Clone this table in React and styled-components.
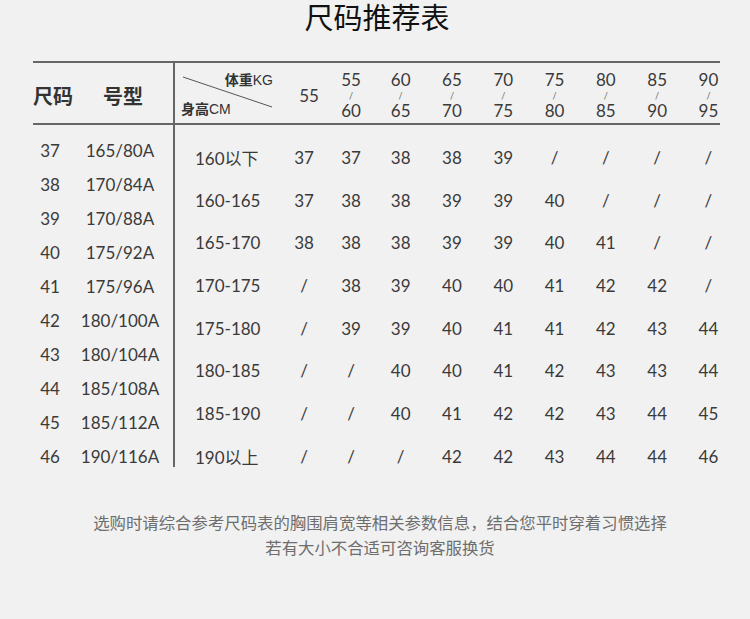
import styled, { createGlobalStyle } from "styled-components";

const weights = [
  ["55"],
  ["55", "60"],
  ["60", "65"],
  ["65", "70"],
  ["70", "75"],
  ["75", "80"],
  ["80", "85"],
  ["85", "90"],
  ["90", "95"],
];

const sizes = [
  ["37", "165/80A"],
  ["38", "170/84A"],
  ["39", "170/88A"],
  ["40", "175/92A"],
  ["41", "175/96A"],
  ["42", "180/100A"],
  ["43", "180/104A"],
  ["44", "185/108A"],
  ["45", "185/112A"],
  ["46", "190/116A"],
];

const rows = [
  ["160以下", "37", "37", "38", "38", "39", "/", "/", "/", "/"],
  ["160-165", "37", "38", "38", "39", "39", "40", "/", "/", "/"],
  ["165-170", "38", "38", "38", "39", "39", "40", "41", "/", "/"],
  ["170-175", "/", "38", "39", "40", "40", "41", "42", "42", "/"],
  ["175-180", "/", "39", "39", "40", "41", "41", "42", "43", "44"],
  ["180-185", "/", "/", "40", "40", "41", "42", "43", "43", "44"],
  ["185-190", "/", "/", "40", "41", "42", "42", "43", "44", "45"],
  ["190以上", "/", "/", "/", "42", "42", "43", "44", "44", "46"],
];

const App = () => {
  return (
    <Page>
      <GlobalStyle />
      <Title>尺码推荐表</Title>
      <Table>
        <HeadRow>
          <LeftHead>
            <span>尺码</span>
            <span>号型</span>
          </LeftHead>
          <RightGrid>
            <Corner>
              <Diagonal width="106" height="60">
                <line x1="8" y1="14" x2="97" y2="44" stroke="#555" strokeWidth="1" />
              </Diagonal>
              <CornerLabel $right>
                <b>体重</b>KG
              </CornerLabel>
              <CornerLabel>
                <b>身高</b>CM
              </CornerLabel>
            </Corner>
            {weights.map((w, i) => (
              <WeightHead key={i} $shift={i === 0}>
                {w.length === 1 ? (
                  <span>{w[0]}</span>
                ) : (
                  <>
                    <span>{w[0]}</span>
                    <Slash>/</Slash>
                    <span>{w[1]}</span>
                  </>
                )}
              </WeightHead>
            ))}
          </RightGrid>
        </HeadRow>
        <BodyRow>
          <LeftBody>
            {sizes.map(([s, t]) => (
              <SizeLine key={s}>
                <Cell>{s}</Cell>
                <Cell>{t}</Cell>
              </SizeLine>
            ))}
          </LeftBody>
          <RightBody>
            {rows.map((r) => (
              <DataLine key={r[0]}>
                {r.map((v, i) =>
                  i === 0 ? (
                    <HeightCell key={i}>{v}</HeightCell>
                  ) : (
                    <Cell key={i}>{v}</Cell>
                  )
                )}
              </DataLine>
            ))}
          </RightBody>
        </BodyRow>
      </Table>
      <Note>
        <p>选购时请综合参考尺码表的胸围肩宽等相关参数信息，结合您平时穿着习惯选择</p>
        <p>若有大小不合适可咨询客服换货</p>
      </Note>
    </Page>
  );
};

export default App;

const GlobalStyle = createGlobalStyle`
  html, body {
    margin: 0;
    padding: 0;
    background: #f1f1f1;
  }
`;

const Page = styled.div`
  width: 750px;
  min-height: 619px;
  background: #f1f1f1;
  font-family: Lato, "Noto Sans CJK SC", sans-serif;
  color: #3a3a3a;
`;

const Title = styled.h1`
  margin: 0;
  padding: 2px 0 0 4px;
  text-align: center;
  font-family: "Noto Sans CJK SC", sans-serif;
  font-size: 29px;
  font-weight: 400;
  line-height: 28px;
  color: #111;
`;

const Table = styled.div`
  width: 687px;
  margin: 31px 0 0 33px;
`;

const COLS = "106px 46px 48px repeat(7, 51.3px)";

const HeadRow = styled.div`
  display: grid;
  grid-template-columns: 140px 1fr;
  height: 60px;
  border-top: 2px solid #666;
  border-bottom: 2px solid #666;
`;

const LeftHead = styled.div`
  display: flex;
  align-items: center;
  gap: 30px;
  padding-top: 4px;
  font-family: "Noto Sans CJK SC", sans-serif;
  font-size: 20px;
  font-weight: 700;
  color: #333;
`;

const RightGrid = styled.div`
  display: grid;
  grid-template-columns: ${COLS};
  border-left: 2px solid #666;
`;

const Corner = styled.div`
  position: relative;
  display: flex;
  flex-direction: column;
  justify-content: space-between;
  padding: 7px 8px 4px 6px;
`;

const Diagonal = styled.svg`
  position: absolute;
  left: 0;
  top: 0;
`;

const CornerLabel = styled.div`
  align-self: ${(p) => (p.$right ? "flex-end" : "flex-start")};
  font-family: "Liberation Sans", "Noto Sans CJK SC", sans-serif;
  font-size: 14px;
  line-height: 19px;
  color: #333;
  b {
    font-family: "Noto Sans CJK SC", sans-serif;
    font-weight: 700;
  }
`;

const WeightHead = styled.div`
  display: flex;
  flex-direction: column;
  align-items: center;
  justify-content: center;
  padding-top: 5px;
  padding-left: ${(p) => (p.$shift ? "10px" : "0")};
  font-size: 17px;
  line-height: 18px;
`;

const Slash = styled.span`
  font-size: 9px;
  line-height: 13px;
  color: #666;
`;

const BodyRow = styled.div`
  display: grid;
  grid-template-columns: 140px 1fr;
  grid-template-rows: 342px;
`;

const LeftBody = styled.div`
  padding-top: 8px;
`;

const SizeLine = styled.div`
  display: grid;
  grid-template-columns: 34px 106px;
  height: 34.1px;
  align-items: center;
`;

const RightBody = styled.div`
  border-left: 2px solid #666;
  padding-top: 11px;
`;

const DataLine = styled.div`
  display: grid;
  grid-template-columns: ${COLS};
  height: 42.7px;
  align-items: center;
`;

const Cell = styled.div`
  text-align: center;
  font-size: 17px;
  white-space: nowrap;
`;

const HeightCell = styled(Cell)`
  text-align: left;
  padding-left: 20px;
`;

const Note = styled.div`
  margin-top: 43px;
  padding-left: 10px;
  text-align: center;
  font-family: "Noto Sans CJK SC", sans-serif;
  font-size: 16.4px;
  line-height: 25px;
  color: #6e6e6e;
  p {
    margin: 0;
  }
`;
